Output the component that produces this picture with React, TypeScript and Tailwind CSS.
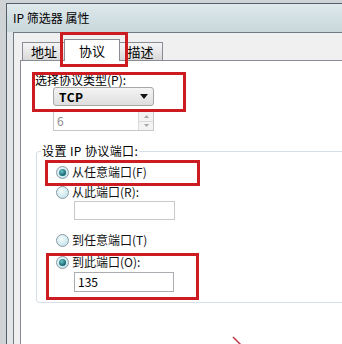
import React from "react";

const Radio = ({ checked }: { checked?: boolean }) => (
  <span className="w-[13px] h-[13px] rounded-full border border-[#8a9aa3] bg-[radial-gradient(circle_at_40%_35%,#f4fbfd,#b9dfe9)] flex items-center justify-center shrink-0">
    {checked && (
      <span className="w-[7px] h-[7px] rounded-full bg-[radial-gradient(circle_at_40%_35%,#6fc4c9,#1a6f78_60%,#0f4e57)]" />
    )}
  </span>
);

const RadioRow = ({ label, checked }: { label: string; checked?: boolean }) => (
  <div className="flex items-center gap-[3px] h-[16px] pl-[19px]">
    <Radio checked={checked} />
    <span className="text-[12px] leading-[14px] text-[#111]">{label}</span>
  </div>
);

const RedBox = ({ className }: { className: string }) => (
  <div className={"absolute border-[3px] border-[#cc1c22] pointer-events-none " + className} />
);

const App = () => {
  return (
    <div className="relative w-[342px] h-[344px] overflow-hidden bg-[#cfd3d6] font-['Noto_Sans_CJK_SC',sans-serif] text-black">
      <div className="ml-[6px] mt-[3px] h-[341px] border-l border-t border-[#56606a] bg-[#e2e6e9] flex flex-col">
        {/* title bar */}
        <div className="h-[28px] flex items-center pl-[6px] text-[12px] bg-gradient-to-b from-[#dfe9ec] via-[#d2dfe3] to-[#c9d6da]">
          IP 筛选器 属性
        </div>

        <div className="ml-[6px] flex-1 border-l border-t border-[#707a82] bg-[#f0f0f0] pl-[6px] flex flex-col">
          {/* tabs */}
          <div className="h-[27px] flex items-end pl-[2px] text-[13px] leading-[16px]">
            <div className="w-[44px] h-[18px] border border-b-0 border-[#898c95] bg-gradient-to-b from-[#f5f5f5] to-[#d9d9d9] flex items-center justify-center">
              地址
            </div>
            <div className="relative z-10 -ml-[2px] -mb-[1px] w-[56px] h-[22px] border border-b-0 border-[#898c95] bg-white flex items-center justify-center">
              协议
            </div>
            <div className="-ml-[2px] w-[45px] h-[18px] border border-b-0 border-[#898c95] bg-gradient-to-b from-[#f5f5f5] to-[#d9d9d9] flex items-center justify-center">
              描述
            </div>
          </div>

          {/* panel */}
          <div className="flex-1 border-l border-t border-[#898c95] bg-white pl-[14px] pt-[12px]">
            <div className="text-[12px] leading-[14px]">选择协议类型(P):</div>

            <div className="ml-[18px] w-[101px] h-[19px] rounded-[3px] border border-[#a7a7a7] bg-gradient-to-b from-[#f4f4f4] to-[#dedede] flex items-center justify-between pl-[5px] pr-[5px]">
              <span className="text-[12px] font-bold tracking-[0.5px]">TCP</span>
              <svg width="8" height="5" viewBox="0 0 8 5">
                <path d="M0 0H8L4 5Z" fill="#111" />
              </svg>
            </div>

            <div className="ml-[18px] mt-[5px] w-[101px] h-[20px] border border-[#c8c8c8] bg-white flex items-stretch">
              <span className="flex-1 pl-[3px] text-[12px] leading-[18px] text-[#8a8a8a]">6</span>
              <div className="w-[15px] flex flex-col border-l border-[#dadada]">
                <div className="flex-1 bg-[#f3f3f3] border-b border-[#dadada] flex items-center justify-center">
                  <svg width="5" height="3" viewBox="0 0 5 3">
                    <path d="M0 3H5L2.5 0Z" fill="#a8a8a8" />
                  </svg>
                </div>
                <div className="flex-1 bg-[#f3f3f3] flex items-center justify-center">
                  <svg width="5" height="3" viewBox="0 0 5 3">
                    <path d="M0 0H5L2.5 3Z" fill="#a8a8a8" />
                  </svg>
                </div>
              </div>
            </div>

            <fieldset className="ml-[1px] mt-[13px] w-[340px] border border-[#d5dfe5] rounded-[3px] pt-[6px] pb-[10px]">
              <legend className="ml-[4px] px-[1px] text-[12px] leading-[14px] tracking-[0.4px]">
                设置 IP 协议端口:
              </legend>
              <RadioRow label="从任意端口(F)" checked />
              <div className="mt-[4px]">
                <RadioRow label="从此端口(R):" />
              </div>
              <div className="ml-[37px] mt-[1px] w-[101px] h-[19px] border border-[#c9c9c9] bg-white" />
              <div className="mt-[12px]">
                <RadioRow label="到任意端口(T)" />
              </div>
              <div className="mt-[6px]">
                <RadioRow label="到此端口(O):" checked />
              </div>
              <div className="ml-[37px] mt-[2px] w-[100px] h-[20px] border border-[#abadb3] bg-white pl-[3px] text-[12px] leading-[18px]">
                135
              </div>
            </fieldset>
          </div>
        </div>
      </div>

      {/* annotation boxes */}
      <RedBox className="left-[60px] top-[32px] w-[68px] h-[35px]" />
      <RedBox className="left-[32px] top-[72px] w-[154px] h-[40px]" />
      <RedBox className="left-[45px] top-[160px] w-[155px] h-[26px]" />
      <RedBox className="left-[46px] top-[253px] w-[153px] h-[47px]" />
      <svg className="absolute left-[230px] top-[335px]" width="14" height="10" viewBox="0 0 14 10">
        <path d="M3 2L11 10" stroke="#c0394a" strokeWidth="1.5" />
      </svg>
    </div>
  );
};

export default App;
